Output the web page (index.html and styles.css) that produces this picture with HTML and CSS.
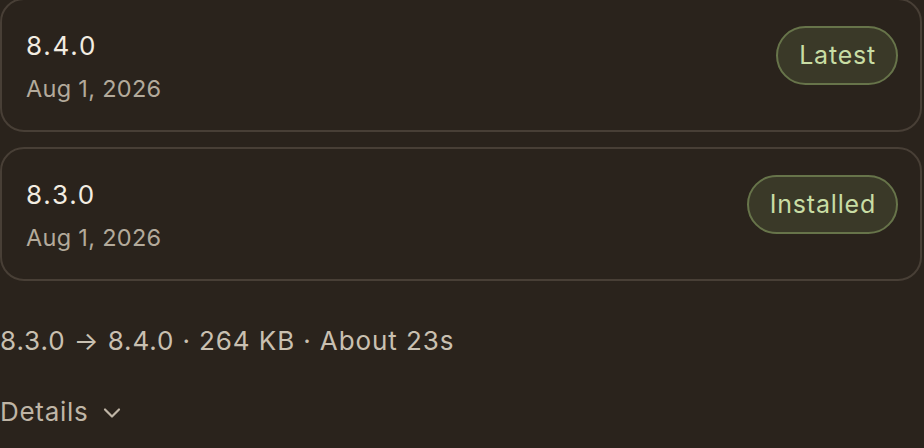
FILE: index.html
```html
<!DOCTYPE html>
<html lang="en">
<head>
<meta charset="utf-8">
<title>Versions</title>
<link rel="stylesheet" href="styles.css">
</head>
<body>
<div class="page">
  <div class="card">
    <div class="info">
      <div class="version">8.4.0</div>
      <div class="date">Aug 1, 2026</div>
    </div>
    <span class="badge">Latest</span>
  </div>
  <div class="card">
    <div class="info">
      <div class="version">8.3.0</div>
      <div class="date">Aug 1, 2026</div>
    </div>
    <span class="badge">Installed</span>
  </div>
  <div class="summary">8.3.0 → 8.4.0 · 264 KB · About 23s</div>
  <button class="details">Details
    <svg class="chev" width="20" height="12" viewBox="0 0 20 12" fill="none" stroke="currentColor" stroke-width="2.2" stroke-linecap="round" stroke-linejoin="round"><path d="M3 2.5 L10 9.5 L17 2.5"/></svg>
  </button>
</div>
</body>
</html>
```
FILE: styles.css
```css
html, body {
  margin: 0;
  padding: 0;
  background: #2a231c;
}
body {
  font-family: Inter, "Noto Sans", sans-serif;
  overflow: hidden;
}
.page {
  display: flex;
  flex-direction: column;
  margin-top: -2px;
  width: 922px;
}
.card {
  display: flex;
  justify-content: space-between;
  align-items: flex-start;
  border: 2px solid #483f36;
  border-radius: 24px;
  padding: 26px 22px 23px 24px;
  background: #2a231c;
}
.card + .card {
  margin-top: 15px;
}
.info {
  display: flex;
  flex-direction: column;
}
.version {
  font-size: 26px;
  line-height: 39px;
  letter-spacing: 1.8px;
  color: #f3ede2;
}
.date {
  font-size: 23.5px;
  line-height: 36px;
  margin-top: 6px;
  letter-spacing: 0.3px;
  color: #b3aa9b;
}
.badge {
  display: inline-block;
  font-size: 25px;
  line-height: 31px;
  letter-spacing: 0.8px;
  padding: 12px 20px 12px 21px;
  border: 2px solid #67744a;
  border-radius: 999px;
  background: #3a3928;
  color: #c8dda4;
}
.summary {
  margin-top: 40px;
  font-size: 26px;
  line-height: 39px;
  letter-spacing: 0.9px;
  color: #c9c0b1;
}
.details {
  align-self: flex-start;
  margin-top: 32px;
  display: flex;
  align-items: center;
  gap: 14px;
  padding: 0;
  border: 0;
  background: none;
  font-family: inherit;
  font-size: 26px;
  line-height: 39px;
  letter-spacing: 0.7px;
  color: #bfb5a6;
}
.chev {
  display: block;
  margin-top: 2px;
}
```
